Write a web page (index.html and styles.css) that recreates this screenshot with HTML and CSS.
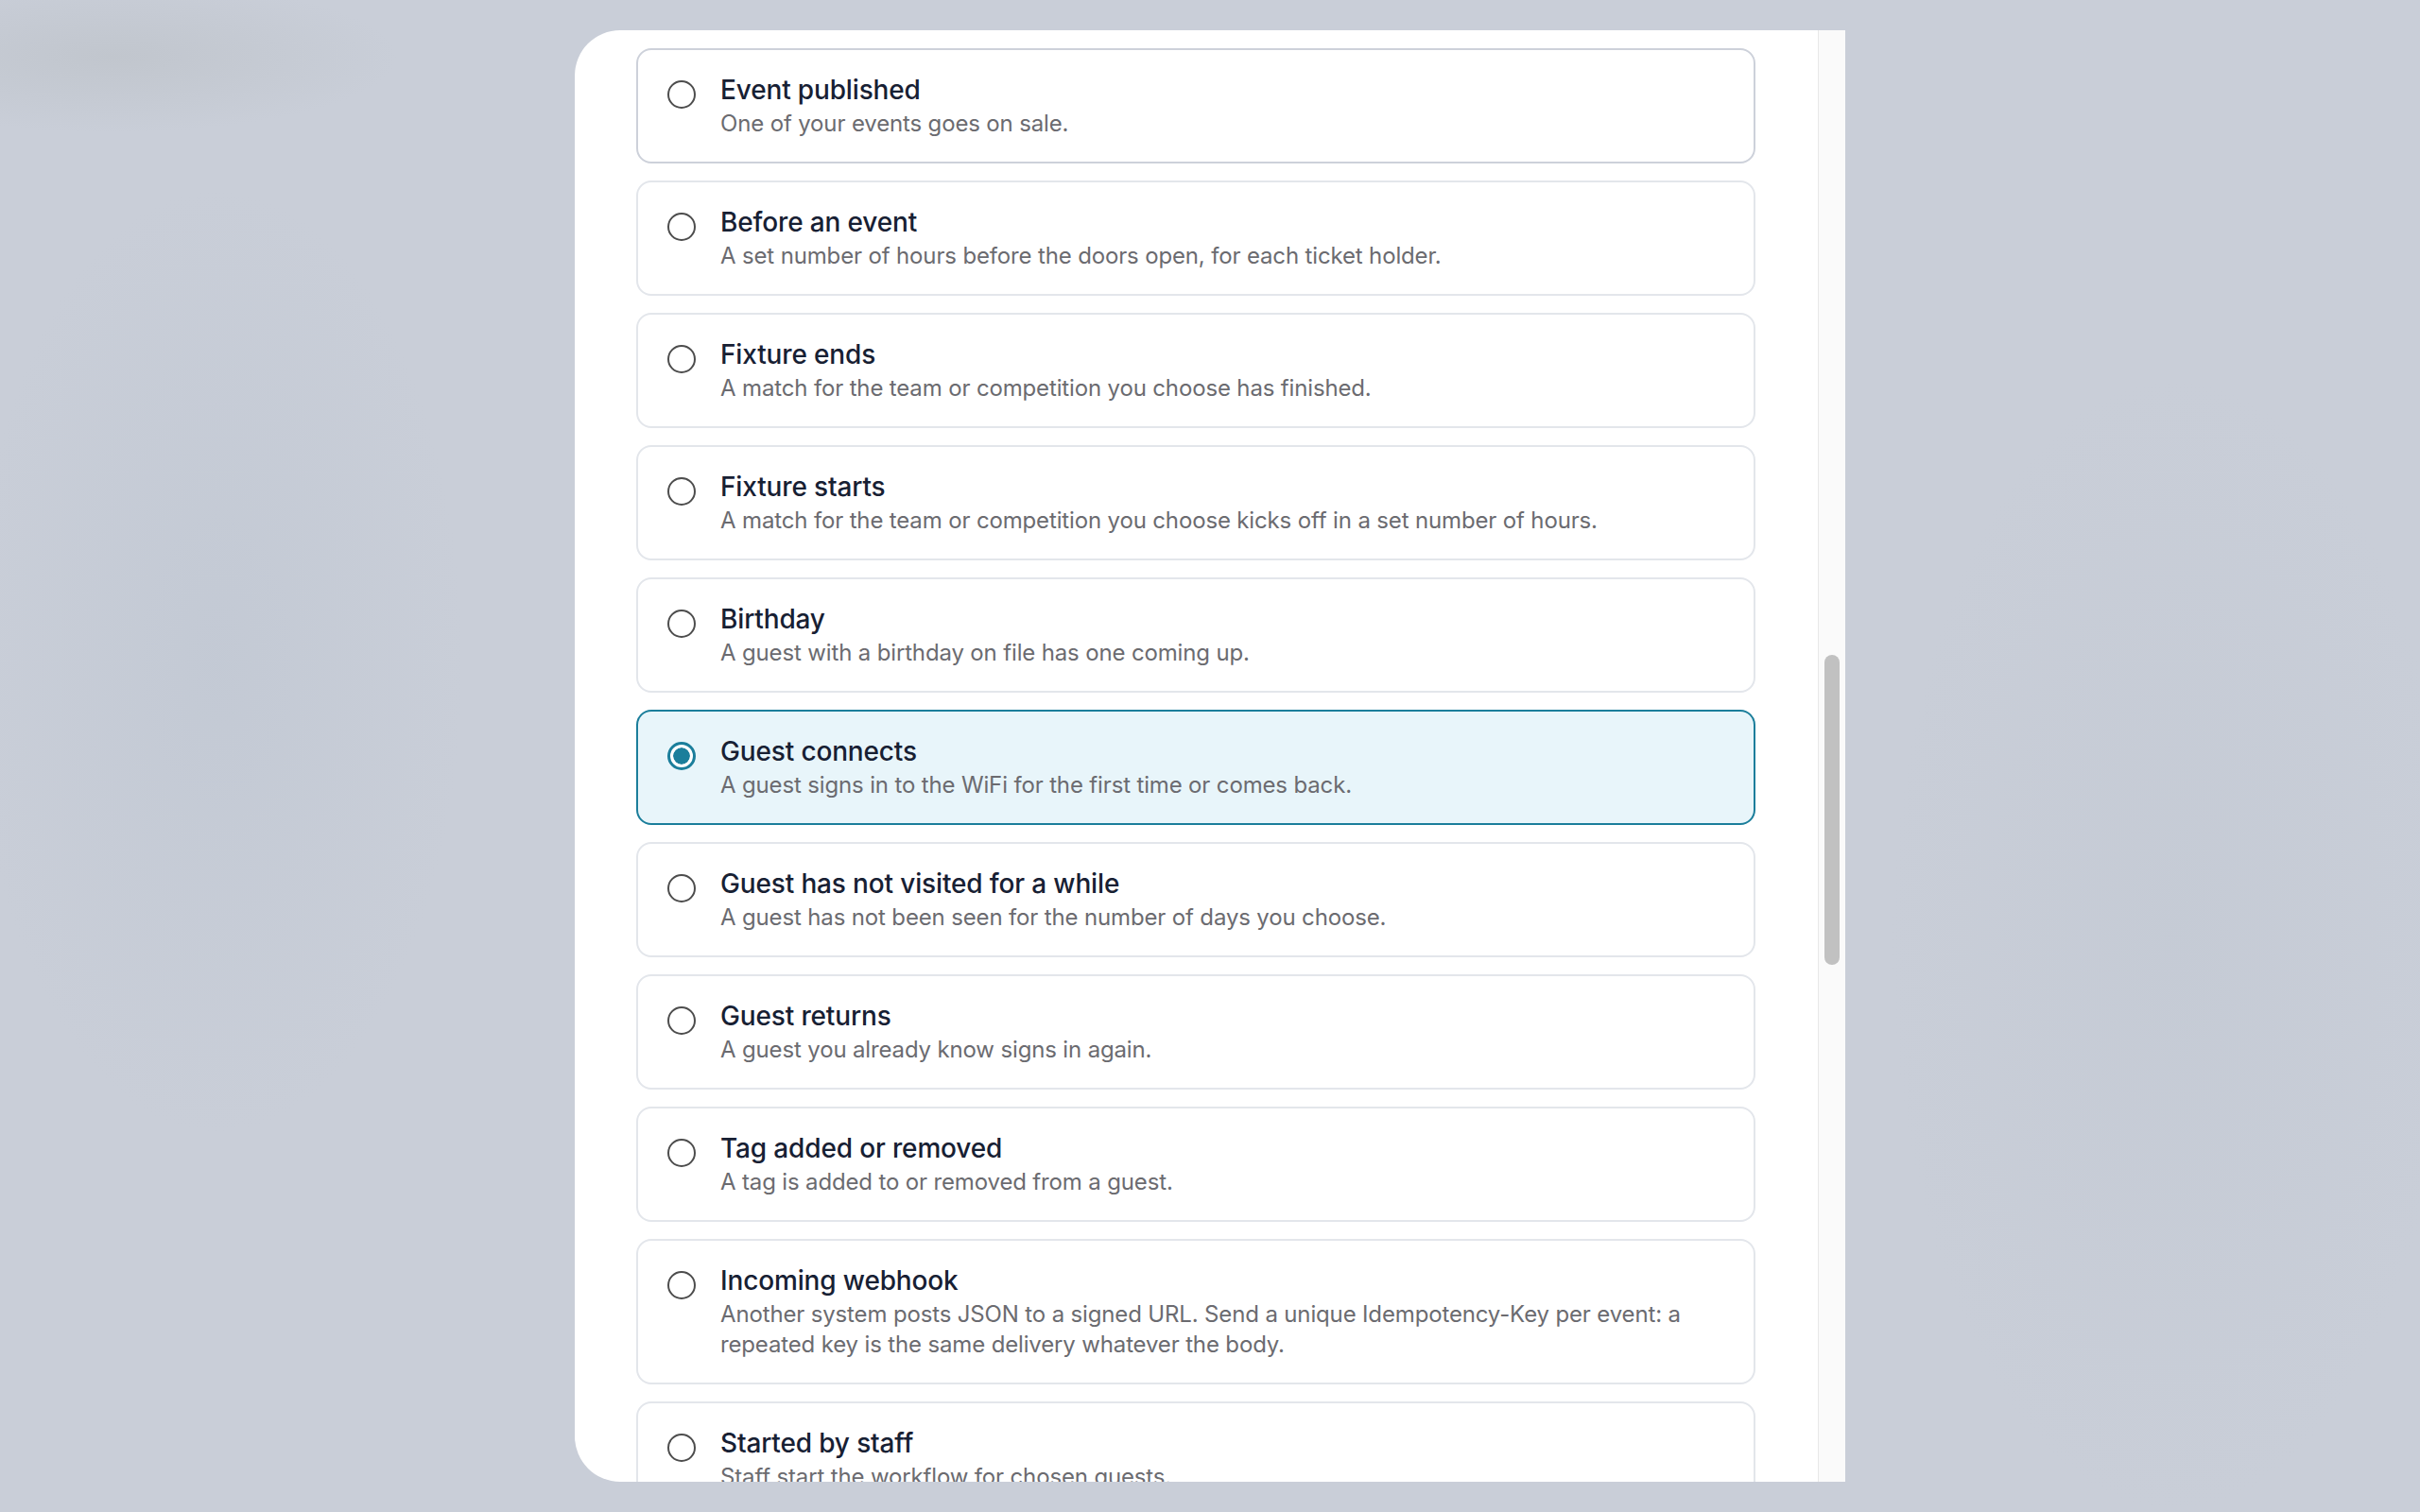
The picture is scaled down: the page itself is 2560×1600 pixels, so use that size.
FILE: index.html
```html
<!DOCTYPE html>
<html lang="en">
  <head>
    <meta charset="UTF-8" />
    <title>Choose a trigger</title>
    <link rel="stylesheet" href="styles.css">
  </head>
  <body>
    <div class="panel">
      <div class="panel-body">
        <div class="trigger-list">
          <label class="trigger trigger-hover">
            <span class="radio"></span>
            <span class="trigger-text">
              <span class="trigger-title">Event published</span>
              <span class="trigger-desc">One of your events goes on sale.</span>
            </span>
          </label>
          <label class="trigger">
            <span class="radio"></span>
            <span class="trigger-text">
              <span class="trigger-title">Before an event</span>
              <span class="trigger-desc">A set number of hours before the doors open, for each ticket holder.</span>
            </span>
          </label>
          <label class="trigger">
            <span class="radio"></span>
            <span class="trigger-text">
              <span class="trigger-title">Fixture ends</span>
              <span class="trigger-desc">A match for the team or competition you choose has finished.</span>
            </span>
          </label>
          <label class="trigger">
            <span class="radio"></span>
            <span class="trigger-text">
              <span class="trigger-title">Fixture starts</span>
              <span class="trigger-desc">A match for the team or competition you choose kicks off in a set number of hours.</span>
            </span>
          </label>
          <label class="trigger">
            <span class="radio"></span>
            <span class="trigger-text">
              <span class="trigger-title">Birthday</span>
              <span class="trigger-desc">A guest with a birthday on file has one coming up.</span>
            </span>
          </label>
          <label class="trigger selected">
            <span class="radio"></span>
            <span class="trigger-text">
              <span class="trigger-title">Guest connects</span>
              <span class="trigger-desc">A guest signs in to the WiFi for the first time or comes back.</span>
            </span>
          </label>
          <label class="trigger">
            <span class="radio"></span>
            <span class="trigger-text">
              <span class="trigger-title">Guest has not visited for a while</span>
              <span class="trigger-desc">A guest has not been seen for the number of days you choose.</span>
            </span>
          </label>
          <label class="trigger">
            <span class="radio"></span>
            <span class="trigger-text">
              <span class="trigger-title">Guest returns</span>
              <span class="trigger-desc">A guest you already know signs in again.</span>
            </span>
          </label>
          <label class="trigger">
            <span class="radio"></span>
            <span class="trigger-text">
              <span class="trigger-title">Tag added or removed</span>
              <span class="trigger-desc">A tag is added to or removed from a guest.</span>
            </span>
          </label>
          <label class="trigger">
            <span class="radio"></span>
            <span class="trigger-text">
              <span class="trigger-title">Incoming webhook</span>
              <span class="trigger-desc">Another system posts JSON to a signed URL. Send a unique Idempotency-Key per event: a repeated key is the same delivery whatever the body.</span>
            </span>
          </label>
          <label class="trigger">
            <span class="radio"></span>
            <span class="trigger-text">
              <span class="trigger-title">Started by staff</span>
              <span class="trigger-desc">Staff start the workflow for chosen guests.</span>
            </span>
          </label>
        </div>
      </div>
      <!-- scrollbar -->
      <div class="scroll-track">
        <div class="scroll-thumb"></div>
      </div>
    </div>
  </body>
</html>
```

FILE: styles.css
```css
html,
body {
  height: 100%;
}

body {
  margin: 0;
  font-family: Inter, "Noto Sans", sans-serif;
  background-color: #c9ced8;
  background-image:
    radial-gradient(ellipse 300px 80px at 120px 60px, rgba(185, 190, 195, 0.5), transparent),
    radial-gradient(ellipse 260px 500px at 230px 700px, rgba(188, 196, 208, 0.45), transparent),
    radial-gradient(ellipse 300px 600px at 2300px 1000px, rgba(190, 197, 208, 0.35), transparent);
  display: flex;
  justify-content: center;
  padding-top: 32px;
  box-sizing: border-box;
  overflow: hidden;
}

.panel {
  width: 1344px;
  height: 1536px;
  display: flex;
  background: #ffffff;
  border-radius: 48px 0 0 48px;
  overflow: hidden;
}

.panel-body {
  flex: 1;
  overflow: hidden;
  padding: 19px 66px 0 65px;
}

.trigger-list {
  display: flex;
  flex-direction: column;
  gap: 18px;
}

.trigger {
  display: flex;
  align-items: flex-start;
  gap: 26px;
  padding: 24px 31px;
  border: 2px solid #e3e6eb;
  border-radius: 16px;
  background: #ffffff;
  cursor: pointer;
}

.trigger-hover {
  border-color: #cdd1da;
}

.radio {
  flex: none;
  width: 30px;
  height: 30px;
  margin-top: 8px;
  box-sizing: border-box;
  border: 2.5px solid #4d4d4d;
  border-radius: 50%;
  background: #ffffff;
}

.trigger-text {
  display: flex;
  flex-direction: column;
  gap: 2px;
}

.trigger-title {
  font-size: 28px;
  line-height: 36px;
  font-weight: 500;
  color: #172033;
  letter-spacing: -0.15px;
}

.trigger-desc {
  font-size: 24px;
  line-height: 32px;
  color: #6b6b70;
  letter-spacing: -0.15px;
}

.trigger.selected {
  background: #e8f5fa;
  border-color: #1b7e9b;
}

.trigger.selected .radio {
  border: 3px solid #1b7e9b;
  padding: 3px;
  background: #1b7e9b content-box;
  box-shadow: inset 0 0 0 3px #ffffff;
}

.scroll-track {
  flex: none;
  width: 28px;
  border-left: 1px solid #e8e8e8;
  background: #fafafa;
}

.scroll-thumb {
  width: 16px;
  height: 328px;
  margin: 661px 0 0 6px;
  border-radius: 8px;
  background: #c1c1c1;
}
```
